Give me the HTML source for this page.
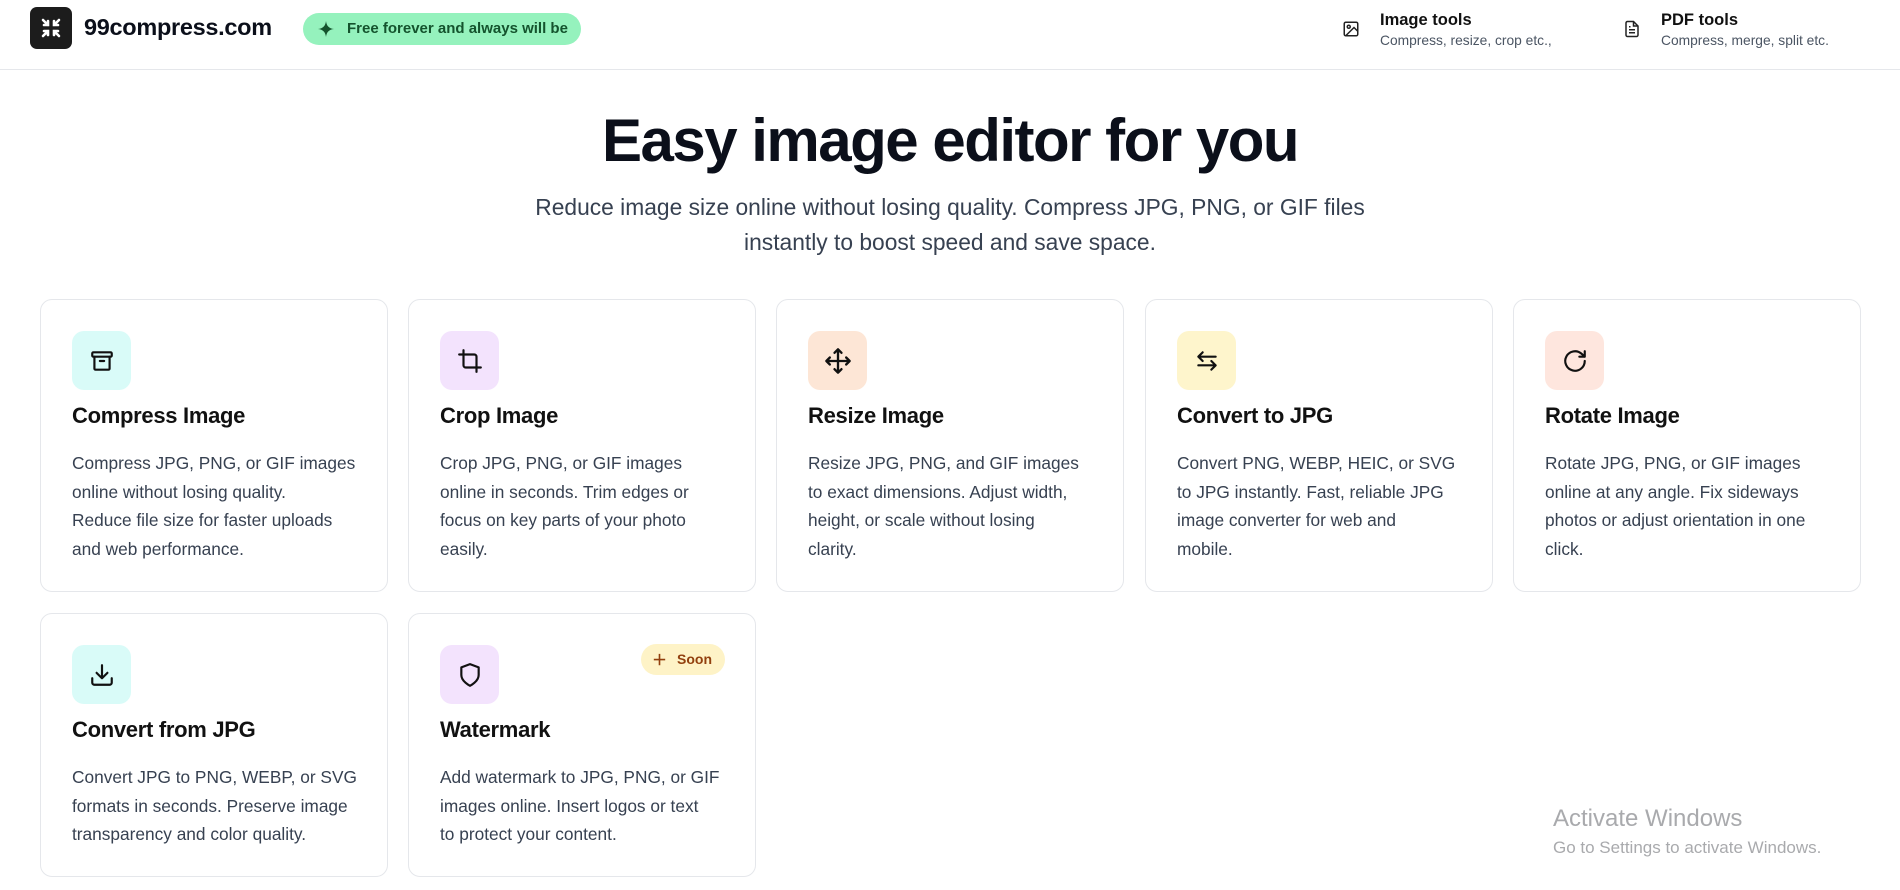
<!DOCTYPE html>
<html><head><meta charset="utf-8"><style>
*{margin:0;padding:0;box-sizing:border-box}
body{width:1900px;height:890px;overflow:hidden;background:#fff;font-family:"Liberation Sans",sans-serif;color:#0b0f1a;position:relative}
.hdr{position:absolute;left:0;top:0;width:1900px;height:70px;border-bottom:1px solid #e5e7eb}
.logo{position:absolute;left:30px;top:7px;width:42px;height:42px;background:#1c1c1c;border-radius:7px}
.brand{position:absolute;left:84px;top:14px;font-size:23.5px;font-weight:bold;letter-spacing:-0.3px}
.badge{position:absolute;left:303px;top:13px;width:278px;height:32px;background:#95f2bd;border-radius:16px;font-size:15px;color:#14532d;font-weight:bold;line-height:32px;padding-left:44px}
.badge svg{position:absolute;left:15px;top:8px}
.nav{position:absolute;top:11px}
.nav .t{font-size:16.5px;font-weight:bold;color:#111}
.nav .s{font-size:13.8px;color:#4b5563;margin-top:3px}
.nav svg{position:absolute;left:-38px;top:9px}
h1{position:absolute;top:106px;width:1900px;text-align:center;font-size:60px;font-weight:bold;letter-spacing:-1.5px;color:#0b0f1a}
.sub{position:absolute;top:190px;width:1900px;text-align:center;font-size:22.8px;line-height:35px;color:#374151}
.card{position:absolute;width:348px;border:1px solid #e5e7eb;border-radius:12px}
.ic{position:absolute;left:31px;top:31px;width:59px;height:59px;border-radius:12px;display:flex;align-items:center;justify-content:center}
.card h3{position:absolute;left:31px;top:103px;font-size:22px;font-weight:bold;color:#111;letter-spacing:-0.3px}
.card p{position:absolute;left:31px;top:149px;white-space:nowrap;font-size:17.3px;line-height:28.5px;color:#374151}
.soon{position:absolute;left:232px;top:30px;width:84px;height:31px;border-radius:16px;background:#fef3c7;color:#92400e;font-size:14px;font-weight:bold;line-height:31px;padding-left:36px}
.soon svg{position:absolute;left:12px;top:9px}
.aw{position:absolute;left:1553px;top:805px;color:#a9aaad;font-size:24px}
.aw2{position:absolute;left:1553px;top:838px;color:#a9aaad;font-size:17px}
</style></head><body>
<div class="hdr">
<div class="logo"><svg width="42" height="42" viewBox="0 0 42 42" fill="none" stroke="#fff" stroke-width="2.6" stroke-linecap="round"><path d="M13 13l5 5M18 14v4h-4M29 13l-5 5M24 14v4h4M13 29l5-5M18 28v-4h-4M29 29l-5-5M24 28v-4h4"/></svg></div>
<div class="brand">99compress.com</div>
<div class="badge"><svg width="16" height="16" viewBox="0 0 16 16"><path d="M8 0C8.6 5 11 7.4 16 8 11 8.6 8.6 11 8 16 7.4 11 5 8.6 0 8 5 7.4 7.4 5 8 0z" fill="#14532d"/></svg>Free forever and always will be</div>
<div class="nav" style="left:1380px"><svg width="18" height="18" viewBox="0 0 24 24" fill="none" stroke="#222" stroke-width="2"><rect x="3" y="3" width="18" height="18" rx="2"/><circle cx="9" cy="9" r="2"/><path d="M21 15l-5-5L5 21"/></svg><div class="t">Image tools</div><div class="s">Compress, resize, crop etc.,</div></div>
<div class="nav" style="left:1661px"><svg width="18" height="18" viewBox="0 0 24 24" fill="none" stroke="#222" stroke-width="2"><path d="M14 2H6a2 2 0 0 0-2 2v16a2 2 0 0 0 2 2h12a2 2 0 0 0 2-2V8z"/><path d="M14 2v6h6M8 13h8M8 17h8M8 9h2"/></svg><div class="t">PDF tools</div><div class="s">Compress, merge, split etc.</div></div>
</div>
<h1>Easy image editor for you</h1>
<div class="sub">Reduce image size online without losing quality. Compress JPG, PNG, or GIF files<br>instantly to boost speed and save space.</div>

<div class="card" style="left:40px;top:299px;height:293px"><div class="ic" style="background:#d9fbf8"><svg width="26" height="26" viewBox="0 0 24 24" fill="none" stroke="#111" stroke-width="2" stroke-linecap="round"><rect x="3" y="4" width="18" height="4" rx="1"/><path d="M5 8v11a1 1 0 0 0 1 1h12a1 1 0 0 0 1-1V8M10 12h4"/></svg></div><h3>Compress Image</h3><p>Compress JPG, PNG, or GIF images<br>online without losing quality.<br>Reduce file size for faster uploads<br>and web performance.</p></div>
<div class="card" style="left:408px;top:299px;height:293px"><div class="ic" style="background:#f3e3fd"><svg width="26" height="26" viewBox="0 0 24 24" fill="none" stroke="#111" stroke-width="2" stroke-linecap="round"><path d="M6 2v14a2 2 0 0 0 2 2h14M18 22V8a2 2 0 0 0-2-2H2"/></svg></div><h3>Crop Image</h3><p>Crop JPG, PNG, or GIF images<br>online in seconds. Trim edges or<br>focus on key parts of your photo<br>easily.</p></div>
<div class="card" style="left:776px;top:299px;height:293px"><div class="ic" style="background:#fde6d6"><svg width="28" height="28" viewBox="0 0 24 24" fill="none" stroke="#111" stroke-width="2" stroke-linecap="round" stroke-linejoin="round"><path d="M12 2v20M2 12h20M9 5l3-3 3 3M9 19l3 3 3-3M5 9l-3 3 3 3M19 9l3 3-3 3"/></svg></div><h3>Resize Image</h3><p>Resize JPG, PNG, and GIF images<br>to exact dimensions. Adjust width,<br>height, or scale without losing<br>clarity.</p></div>
<div class="card" style="left:1145px;top:299px;height:293px"><div class="ic" style="background:#fef5cc"><svg width="26" height="26" viewBox="0 0 24 24" fill="none" stroke="#111" stroke-width="2" stroke-linecap="round" stroke-linejoin="round"><path d="M20 8H4M8 4L4 8l4 4M4 16h16M16 12l4 4-4 4"/></svg></div><h3>Convert to JPG</h3><p>Convert PNG, WEBP, HEIC, or SVG<br>to JPG instantly. Fast, reliable JPG<br>image converter for web and<br>mobile.</p></div>
<div class="card" style="left:1513px;top:299px;height:293px"><div class="ic" style="background:#fee6de"><svg width="26" height="26" viewBox="0 0 24 24" fill="none" stroke="#111" stroke-width="2" stroke-linecap="round" stroke-linejoin="round"><path d="M21 12a9 9 0 1 1-3-6.7L21 8M21 3v5h-5"/></svg></div><h3>Rotate Image</h3><p>Rotate JPG, PNG, or GIF images<br>online at any angle. Fix sideways<br>photos or adjust orientation in one<br>click.</p></div>

<div class="card" style="left:40px;top:613px;height:264px"><div class="ic" style="background:#d9fbf8"><svg width="26" height="26" viewBox="0 0 24 24" fill="none" stroke="#111" stroke-width="2" stroke-linecap="round" stroke-linejoin="round"><path d="M21 15v4a2 2 0 0 1-2 2H5a2 2 0 0 1-2-2v-4M7 10l5 5 5-5M12 15V3"/></svg></div><h3>Convert from JPG</h3><p>Convert JPG to PNG, WEBP, or SVG<br>formats in seconds. Preserve image<br>transparency and color quality.</p></div>
<div class="card" style="left:408px;top:613px;height:264px"><div class="ic" style="background:#f3e3fd"><svg width="26" height="26" viewBox="0 0 24 24" fill="none" stroke="#111" stroke-width="2" stroke-linejoin="round"><path d="M12 22s8-4 8-10V5l-8-3-8 3v7c0 6 8 10 8 10z"/></svg></div><div class="soon"><svg width="13" height="13" viewBox="0 0 16 16"><path d="M8 1v14M1 8h14" stroke="#92400e" stroke-width="2"/></svg>Soon</div><h3>Watermark</h3><p>Add watermark to JPG, PNG, or GIF<br>images online. Insert logos or text<br>to protect your content.</p></div>

<div class="aw">Activate Windows</div>
<div class="aw2">Go to Settings to activate Windows.</div>
</body></html>
